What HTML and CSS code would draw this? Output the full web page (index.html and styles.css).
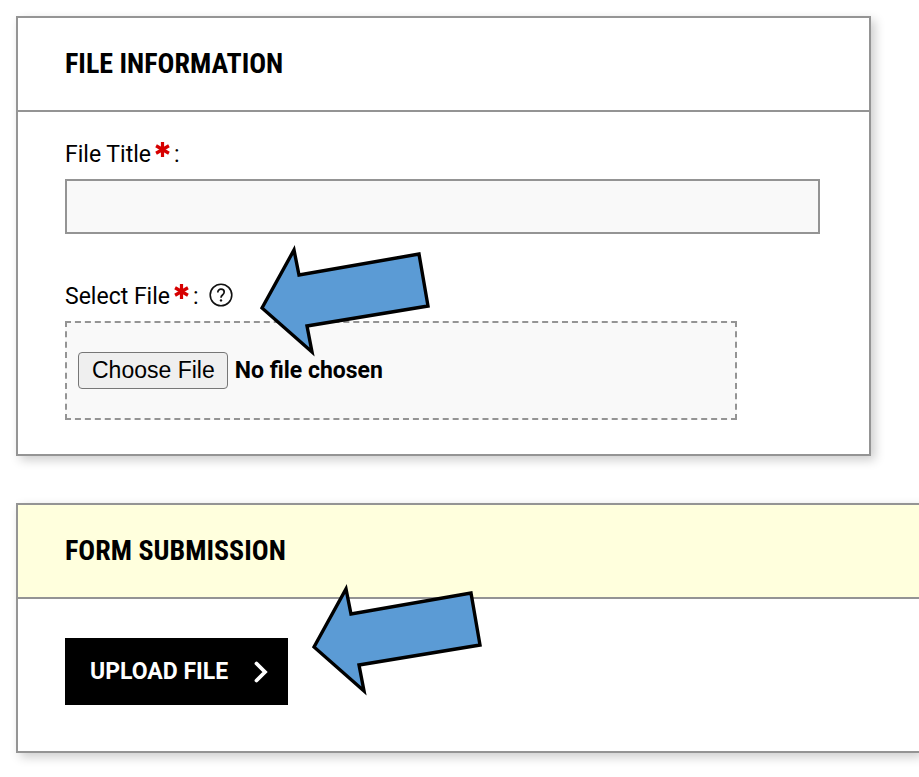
FILE: index.html
```html
<!doctype html>
<html lang="en">
  <head>
    <meta charset="UTF-8" />
    <meta name="viewport" content="width=device-width, initial-scale=1.0" />
    <title>Upload File</title>
    <link rel="stylesheet" href="styles.css">
  </head>
  <body>
    <svg class="defs" width="0" height="0" aria-hidden="true">
      <symbol id="required" viewBox="0 0 14 14">
        <path d="M7 0v14M1 3.5l12 7M1 10.5l12-7" stroke="#d60000" stroke-width="3" />
      </symbol>
      <symbol id="arrow" viewBox="0 0 180 120">
        <path d="M6 68L38 10L43 35L163 14L172 66L51 86L56 112Z" fill="#5b9bd5" stroke="#000" stroke-width="3.4" stroke-miterlimit="8" />
      </symbol>
    </svg>

    <form class="upload-form" action="/upload" method="POST" enctype="multipart/form-data">
      <section class="panel">
        <h2>File Information</h2>
        <div class="panel-body">
          <div class="field">
            <div class="field-label">
              <label for="fileTitle">File Title<svg class="required"><use href="#required" /></svg>:</label>
            </div>
            <input type="text" id="fileTitle" name="fileTitle" required />
          </div>
          <div class="field">
            <div class="field-label">
              <label for="file">Select File<svg class="required"><use href="#required" /></svg>:</label>
              <button type="button" class="help" aria-label="Help">
                <svg viewBox="0 0 24 24" fill="none" stroke="#111">
                  <circle cx="12" cy="12" r="10.8" stroke-width="1.6" />
                  <path d="M8.8 9.4C8.8 7.4 10.1 6.2 12 6.2s3.2 1.1 3.2 2.9c0 1.4-.7 2.1-1.7 2.9-1 .8-1.5 1.3-1.5 2.8" stroke-width="1.7" />
                  <circle cx="12" cy="17.4" r="1.2" fill="#111" stroke="none" />
                </svg>
              </button>
            </div>
            <div class="drop-area">
              <input type="file" id="file" name="file" required />
            </div>
            <svg class="arrow"><use href="#arrow" /></svg>
          </div>
        </div>
      </section>

      <section class="panel panel-submit">
        <h2>Form Submission</h2>
        <div class="panel-body">
          <button type="submit">
            Upload File
            <svg viewBox="0 0 14 22" fill="none" stroke="#fff">
              <path d="M2.5 2.5L11 11l-8.500 8.500" stroke-width="3.8" stroke-linecap="round" />
            </svg>
          </button>
          <svg class="arrow"><use href="#arrow" /></svg>
        </div>
      </section>
    </form>
  </body>
</html>
```
FILE: styles.css
```css
* {
  box-sizing: border-box;
}

body {
  margin: 0;
  background-color: #fff;
  color: #000;
  font-family: Roboto, "Liberation Sans", sans-serif;
  font-size: 23px;
  line-height: 28px;
}

.defs {
  position: absolute;
}

.upload-form {
  padding: 16px 48px 24px 16px;
}

.panel {
  border: 2px solid #949494;
  background-color: #fff;
  box-shadow: 4px 4px 10px rgba(0, 0, 0, 0.2);
}

.panel h2 {
  margin: 0;
  padding: 28px 47px;
  border-bottom: 2px solid #949494;
  font-family: "Roboto Condensed", "Liberation Sans Narrow", Roboto, sans-serif;
  font-size: 28px;
  line-height: 36px;
  font-weight: 700;
  text-transform: uppercase;
}

.panel-body {
  position: relative;
  padding: 29px 49px 34px 47px;
}

.field {
  position: relative;
}

.field + .field {
  margin-top: 49px;
}

.field-label {
  display: flex;
  align-items: flex-start;
  gap: 10px;
  margin-bottom: 10px;
}

.required {
  width: 15px;
  height: 15px;
  margin: 0 4px;
  vertical-align: 5px;
}

.field-label label {
  height: 28px;
}

.help {
  display: flex;
  padding: 0;
  border: none;
  background: none;
  cursor: pointer;
}

.help svg {
  width: 24px;
  height: 24px;
}

input[type="text"] {
  display: block;
  width: 100%;
  height: 55px;
  padding: 12px;
  border: 2px solid #949494;
  border-radius: 0;
  background-color: #f9f9f9;
  font: inherit;
}

.drop-area {
  width: 89%;
  padding: 29px 11px;
  border: 2px dashed #949494;
  background-color: #f9f9f9;
}

input[type="file"] {
  display: block;
  width: 100%;
  font: inherit;
  font-weight: 700;
}

input[type="file"]::file-selector-button {
  height: 37px;
  margin: 0 7px 0 0;
  padding: 0 12px 0 13px;
  border: 1px solid #767676;
  border-radius: 4px;
  background-color: #efefef;
  color: #000;
  font-family: "Liberation Sans", Arial, sans-serif;
  font-size: 23px;
  font-weight: 400;
}

.arrow {
  position: absolute;
  top: -43px;
  left: 191px;
  width: 180px;
  height: 120px;
}

/* Runs to the right edge of the window */
.panel-submit {
  margin: 47px -48px 0 0;
  border-right: none;
}

.panel-submit h2 {
  background-color: #ffffdd;
}

.panel-submit .panel-body {
  padding: 39px 47px 46px;
}

.panel-submit .arrow {
  top: -20px;
  left: 290px;
}

button[type="submit"] {
  display: flex;
  align-items: center;
  gap: 26px;
  height: 67px;
  padding: 0 20px 0 25px;
  border: none;
  background-color: #000;
  color: #fff;
  font: inherit;
  font-weight: 700;
  text-transform: uppercase;
  cursor: pointer;
}

button[type="submit"] svg {
  width: 14px;
  height: 22px;
}
```
